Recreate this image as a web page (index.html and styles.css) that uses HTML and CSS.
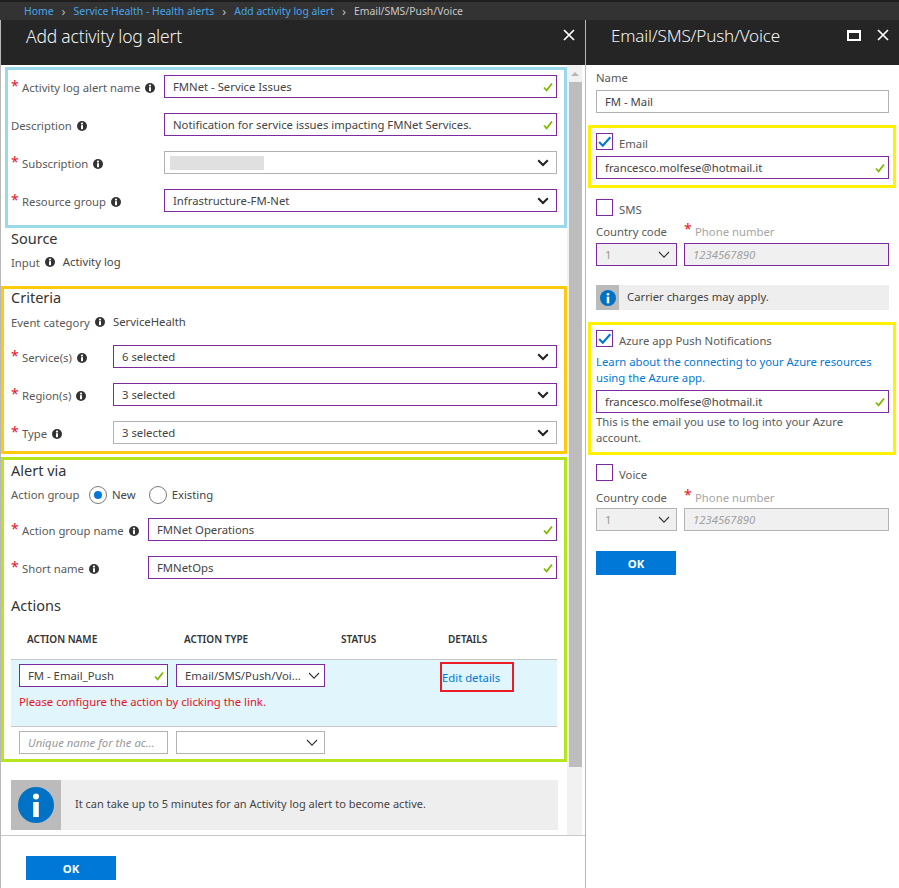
FILE: index.html
```html
<!DOCTYPE html>
<html lang="en">
<head>
  <meta charset="UTF-8">
  <title>Add activity log alert</title>
  <link rel="stylesheet" href="styles.css">
</head>
<body>
  <svg class="defs" width="0" height="0">
    <symbol id="info" viewBox="0 0 10 10"><circle cx="5" cy="5" r="5" fill="#333"/><circle cx="5" cy="2.6" r="1.1" fill="#fff"/><rect x="4" y="4.2" width="2" height="4" fill="#fff"/></symbol>
    <symbol id="check" viewBox="0 0 10 10"><path d="M1 5.5l2.6 2.8L9 1.5" fill="none" stroke="#7fba00" stroke-width="1.8"/></symbol>
    <symbol id="chev-bold" viewBox="0 0 12 8"><path d="M1.2 1.2L6 6l4.8-4.8" fill="none" stroke="#222" stroke-width="2"/></symbol>
    <symbol id="chev" viewBox="0 0 12 8"><path d="M1 1l5 5.2L11 1" fill="none" stroke="#333" stroke-width="1.1"/></symbol>
    <symbol id="close" viewBox="0 0 12 12"><path d="M1 1l10 10M11 1L1 11" fill="none" stroke="#fff" stroke-width="1.7"/></symbol>
    <symbol id="tick" viewBox="0 0 14 14"><path d="M2 7.5l3.4 3.5L12.4 3" fill="none" stroke="#0078d7" stroke-width="2"/></symbol>
    <symbol id="big-info" viewBox="0 0 36 36"><circle cx="18" cy="18" r="18" fill="#0072c6"/><circle cx="18" cy="9.5" r="3" fill="#fff"/><rect x="15.2" y="15" width="5.6" height="15" fill="#fff"/></symbol>
  </svg>

  <nav class="crumbs">
    <a>Home</a><span class="sep">&rsaquo;</span>
    <a>Service Health - Health alerts</a><span class="sep">&rsaquo;</span>
    <a>Add activity log alert</a><span class="sep">&rsaquo;</span>
    <span>Email/SMS/Push/Voice</span>
  </nav>

  <div class="blades">
    <section class="blade blade-main">
      <header class="blade-head">
        <h1>Add activity log alert</h1>
        <svg class="head-icon"><use href="#close"/></svg>
      </header>

      <div class="blade-scroll">
        <div class="blade-content">
          <div class="box box-blue col-blue">
            <div class="row"><label class="req">Activity log alert name <svg class="i"><use href="#info"/></svg></label>
              <div class="control valid">FMNet - Service Issues<svg class="ok"><use href="#check"/></svg></div></div>
            <div class="row"><label>Description <svg class="i"><use href="#info"/></svg></label>
              <div class="control valid">Notification for service issues impacting FMNet Services.<svg class="ok"><use href="#check"/></svg></div></div>
            <div class="row"><label class="req">Subscription <svg class="i"><use href="#info"/></svg></label>
              <div class="control select"><span class="redacted"></span><svg class="chev"><use href="#chev-bold"/></svg></div></div>
            <div class="row"><label class="req">Resource group <svg class="i"><use href="#info"/></svg></label>
              <div class="control valid select">Infrastructure-FM-Net<svg class="chev"><use href="#chev-bold"/></svg></div></div>
          </div>

          <div class="source">
            <h2>Source</h2>
            <div class="static"><label>Input <svg class="i"><use href="#info"/></svg></label><span>Activity log</span></div>
          </div>

          <div class="box box-orange col-orange">
            <h2>Criteria</h2>
            <div class="static event"><label>Event category <svg class="i"><use href="#info"/></svg></label><span>ServiceHealth</span></div>
            <div class="row"><label class="req">Service(s) <svg class="i"><use href="#info"/></svg></label>
              <div class="control valid select">6 selected<svg class="chev"><use href="#chev-bold"/></svg></div></div>
            <div class="row"><label class="req">Region(s) <svg class="i"><use href="#info"/></svg></label>
              <div class="control valid select">3 selected<svg class="chev"><use href="#chev-bold"/></svg></div></div>
            <div class="row"><label class="req">Type <svg class="i"><use href="#info"/></svg></label>
              <div class="control select">3 selected<svg class="chev"><use href="#chev-bold"/></svg></div></div>
          </div>

          <div class="box box-green col-green">
            <h2>Alert via</h2>
            <div class="radios">
              <label>Action group</label>
              <span class="radio on"></span><span class="radio-text">New</span>
              <span class="radio"></span><span class="radio-text">Existing</span>
            </div>
            <div class="row"><label class="req">Action group name <svg class="i"><use href="#info"/></svg></label>
              <div class="control valid">FMNet Operations<svg class="ok"><use href="#check"/></svg></div></div>
            <div class="row"><label class="req">Short name <svg class="i"><use href="#info"/></svg></label>
              <div class="control valid">FMNetOps<svg class="ok"><use href="#check"/></svg></div></div>
            <h2 class="actions-title">Actions</h2>
            <div class="table-head"><span>ACTION NAME</span><span>ACTION TYPE</span><span>STATUS</span><span>DETAILS</span></div>
            <div class="table-row">
              <div class="cells">
                <div class="control valid small">FM - Email_Push<svg class="ok"><use href="#check"/></svg></div>
                <div class="control valid small select tight">Email/SMS/Push/Voi...<svg class="chev thin"><use href="#chev"/></svg></div>
                <a class="edit-details">Edit details</a>
              </div>
              <p class="error">Please configure the action by clicking the link.</p>
            </div>
            <div class="cells new-row">
              <div class="control small placeholder">Unique name for the ac...</div>
              <div class="control small select"><svg class="chev thin"><use href="#chev"/></svg></div>
            </div>
          </div>

          <div class="note note-big">
            <div class="note-tile"><svg class="big-info"><use href="#big-info"/></svg></div>
            <span>It can take up to 5 minutes for an Activity log alert to become active.</span>
          </div>
        </div>

        <div class="scrollbar">
          <div class="scroll-arrow"></div>
          <div class="scroll-thumb"></div>
        </div>
      </div>

      <footer class="blade-foot"><button type="button" class="btn">OK</button></footer>
    </section>

    <section class="blade blade-side">
      <header class="blade-head">
        <h1>Email/SMS/Push/Voice</h1>
        <span class="max-icon"></span>
        <svg class="head-icon"><use href="#close"/></svg>
      </header>

      <div class="side-body">
        <label class="top-label">Name</label>
        <div class="control name-input">FM - Mail</div>

        <div class="box-yellow first-yellow">
          <div class="check-line"><span class="checkbox"><svg><use href="#tick"/></svg></span><span>Email</span></div>
          <div class="control valid mail">francesco.molfese@hotmail.it<svg class="ok"><use href="#check"/></svg></div>
        </div>

        <div class="check-line sms"><span class="checkbox"></span><span>SMS</span></div>
        <div class="phone-labels"><label>Country code</label><label class="req-soft">Phone number</label></div>
        <div class="phone-inputs">
          <div class="control valid small-select disabled">1<svg class="chev thin"><use href="#chev"/></svg></div>
          <div class="control valid phone disabled">1234567890</div>
        </div>

        <div class="note note-small">
          <div class="note-tile"><svg class="small-info"><use href="#big-info"/></svg></div>
          <span>Carrier charges may apply.</span>
        </div>

        <div class="box-yellow second-yellow">
          <div class="check-line"><span class="checkbox"><svg><use href="#tick"/></svg></span><span>Azure app Push Notifications</span></div>
          <a class="learn">Learn about the connecting to your Azure resources using the Azure app.</a>
          <div class="control valid mail">francesco.molfese@hotmail.it<svg class="ok"><use href="#check"/></svg></div>
          <p class="help">This is the email you use to log into your Azure account.</p>
        </div>

        <div class="check-line voice"><span class="checkbox"></span><span>Voice</span></div>
        <div class="phone-labels voice-labels"><label>Country code</label><label class="req-soft">Phone number</label></div>
        <div class="phone-inputs voice-inputs">
          <div class="control small-select disabled">1<svg class="chev thin"><use href="#chev"/></svg></div>
          <div class="control phone disabled">1234567890</div>
        </div>

        <button type="button" class="btn side-btn">OK</button>
      </div>
    </section>
  </div>
</body>
</html>
```

FILE: styles.css
```css
* { margin: 0; padding: 0; box-sizing: border-box; }

html, body {
  width: 899px;
  height: 888px;
  overflow: hidden;
}
body {
  font-family: "Noto Sans", "Open Sans", sans-serif;
  font-size: 11.3px;
  color: #444;
  background: #fff;
  display: flex;
  flex-direction: column;
}
.defs { position: absolute; }

/* breadcrumb */
.crumbs {
  height: 20px;
  background: #333;
  border-top: 2px solid #1d1d1d;
  padding-left: 24px;
  display: flex;
  align-items: center;
  gap: 8px;
  font-size: 10.4px;
  color: #c8c8c8;
}
.crumbs a { color: #46a5ea; }
.crumbs .sep { font-size: 13px; color: #bbb; line-height: 12px; }

/* blades */
.blades { display: flex; flex: 1; }
.blade { display: flex; flex-direction: column; border-left: 1px solid #b8b8b8; }
.blade-main { width: 585px; }
.blade-side { width: 314px; }
.blade-head {
  height: 45px;
  background: #252525;
  color: #fff;
  display: flex;
  align-items: flex-start;
  padding-top: 6px;
  flex: none;
}
.blade-head h1 { font-size: 17.5px; font-weight: 300; line-height: 20px; letter-spacing: -0.2px; color: #f2f2f2; margin-left: 25px; flex: 1; }
.blade-side .blade-head h1 { font-size: 17.1px; }
.head-icon { width: 12px; height: 12px; margin: 3px 10px 0 0; }
.max-icon { width: 14px; height: 11px; border: 2px solid #fff; border-top-width: 3px; margin: 4px 16px 0 0; }
.blade-side .head-icon { margin-right: 10px; }

.blade-scroll { display: flex; height: 770px; flex: none; }
.blade-content { width: 566px; padding-top: 2px; }

.blade-foot { border-top: 1px solid #c8c8c8; padding: 20px 0 0 25px; }
.btn {
  width: 90px;
  height: 24px;
  background: #0078d7;
  color: #fff;
  border: none;
  font: 700 11.3px "Noto Sans", sans-serif;
}

/* scrollbar */
.scrollbar { width: 15px; background: #f1f1f1; padding: 7px 0 0 1px; margin-left: 0; }
.scroll-arrow {
  width: 0;
  height: 0;
  border: 4px solid transparent;
  border-top: none;
  border-bottom: 4px solid #b5b5b5;
  margin: 0 0 6px 3px;
  box-sizing: content-box;
}
.scroll-thumb { width: 13px; height: 685px; background: #bdbdbd; margin-left: 1px; }

/* highlighted boxes */
.box { border: 3px solid; }
.box-blue { border-color: #99d9ea; margin-left: 4px; padding: 5px 7px 13px 3px; }
.box-orange { border-color: #ffc90e; padding: 0 7px 7px 7px; }
.box-green { border-color: #b5e61d; padding: 1px 7px 5px 7px; margin-top: 3px; }

h2 { font-size: 14.5px; font-weight: 400; line-height: 18px; color: #333; }
.box-orange h2 { line-height: 17px; }

.source { padding: 1px 0 0 10px; height: 58px; }
.source .static { margin-top: 5px; }

.static { display: flex; align-items: center; height: 18px; }
.static label { color: #595959; display: flex; align-items: center; gap: 5px; padding-top: 2px; }
.source .static span { margin-left: 8px; }
.event { margin-top: 6px; margin-bottom: 15px; }
.event label { width: 102px; }

/* form rows */
.row { display: flex; align-items: center; height: 23px; margin-bottom: 15px; }
.row:last-child { margin-bottom: 0; }
.row label, .radios label { color: #595959; white-space: nowrap; padding-top: 2px; display: flex; align-items: center; gap: 5px; position: relative; }
.req { padding-left: 11px; }
.req::before { content: "*"; position: absolute; left: 0; top: -2px; color: #e81123; font-size: 14px; }
.col-blue .row label { width: 153px; }
.col-orange .row label { width: 102px; }
.col-green .row label { width: 137px; }
.col-green .row:last-of-type { margin-bottom: 0; }

.i { width: 10px; height: 10px; flex: none; }

.control {
  height: 23px;
  flex: 1;
  border: 1px solid #b3b3b3;
  background: #fff;
  padding-left: 8px;
  display: flex;
  align-items: center;
  justify-content: space-between;
  white-space: nowrap;
  overflow: hidden;
}
.control.valid { border-color: #7d2a9f; }
.ok { width: 10px; height: 10px; margin-right: 3px; flex: none; }
.chev { width: 12px; height: 8px; margin-right: 7px; margin-left: auto; flex: none; }
.chev.thin { margin-right: 6px; }
.redacted { width: 94px; height: 14px; background: #e0e0e0; margin-left: -3px; }

/* radios */
.radios { display: flex; align-items: center; height: 20px; margin: 6px 0 13px; }
.radios label { width: 78px; padding-top: 0; padding-bottom: 1px; }
.radio { width: 18px; height: 18px; border: 1px solid #7a7a7a; border-radius: 50%; position: relative; }
.radio.on::after { content: ""; position: absolute; inset: 4px; background: #0078d7; border-radius: 50%; }
.radio-text { margin: 0 13px 0 5px; padding-bottom: 1px; }
.radio-text:last-child { margin-right: 0; }

/* actions table */
.actions-title { margin-top: 17px; }
.table-head { display: grid; grid-template-columns: 157px 157px 107px 1fr; padding-left: 16px; margin-top: 18px; height: 27px; font-size: 10px; font-weight: 600; color: #333; line-height: 14px; }
.table-row { height: 68px; background: #e1f5fd; border-top: 1px solid #c8c8c8; border-bottom: 1px solid #c8c8c8; padding: 4px 8px 0; }
.cells { display: flex; gap: 8px; align-items: flex-start; }
.control.small { width: 149px; flex: none; }
.tight .chev { margin-right: 4px; margin-left: 2px; }
.edit-details { margin: -2px 0 0 107px; width: 74px; height: 30px; border: 2px solid #ed1c24; color: #0078d7; padding: 6px 0 0 0; line-height: 16px; }
.error { color: #e81123; margin-top: 2px; line-height: 16px; }
.new-row { padding: 4px 8px 0; }
.placeholder { color: #999; font-style: italic; }

/* notes */
.note { display: flex; align-items: center; background: #eee; }
.note-big { height: 50px; margin: 18px 9px 0 10px; font-size: 11px; }
.note-big > span { padding-bottom: 3px; }
.note-big .note-tile { width: 50px; height: 50px; background: #bbb; display: flex; align-items: center; justify-content: center; margin-right: 14px; }
.big-info { width: 36px; height: 36px; }
.note-small { height: 25px; margin-top: 19px; }
.note-small > span { padding-bottom: 2px; }
.note-small .note-tile { width: 23px; height: 25px; background: #bbb; display: flex; align-items: center; justify-content: center; margin-right: 8px; }
.small-info { width: 16px; height: 16px; }

/* side blade */
.side-body { padding: 5px 10px 0 10px; display: flex; flex-direction: column; }
.top-label { line-height: 16px; color: #595959; }
.control.name-input, .control.mail { flex: none; }
.name-input { margin-top: 4px; }
.box-yellow { border: 3px solid #fff200; margin: 12px -7px 0 -8px; padding: 5px 4px 6px 5px; }
.check-line { display: flex; align-items: center; gap: 6px; height: 17px; color: #595959; }
.check-line > span:last-child { padding-top: 3px; }
.checkbox { width: 17px; height: 17px; border: 1px solid #7d2a9f; background: #fff; flex: none; }
.checkbox svg { width: 15px; height: 15px; display: block; }
.mail { margin-top: 6px; }
.sms { margin-top: 11px; }
.phone-labels { display: flex; margin-top: 8px; line-height: 16px; color: #595959; }
.phone-labels label:first-child { width: 88px; }
.req-soft { color: #a6a6a6; padding-left: 11px; position: relative; }
.req-soft::before { content: "*"; position: absolute; left: 0; top: -3px; color: #e81123; font-size: 14px; }
.phone-inputs { display: flex; gap: 7px; margin-top: 3px; }
.control.small-select { width: 81px; flex: none; }
.control.disabled { background: #f0f0f0; color: #999; }
.control.phone { font-style: italic; color: #a0a0a0; }
.second-yellow { height: 133px; }
.second-yellow .mail { margin-top: 4px; }
.learn { display: block; color: #0078d7; line-height: 16px; margin-top: 7px; }
.help { line-height: 16px; color: #595959; margin-top: 1px; }
.voice { margin-top: 9px; }
.voice-labels { margin-top: 9px; }
.voice-inputs { margin-top: 2px; }
.side-btn { margin-top: 20px; width: 80px; }
```
